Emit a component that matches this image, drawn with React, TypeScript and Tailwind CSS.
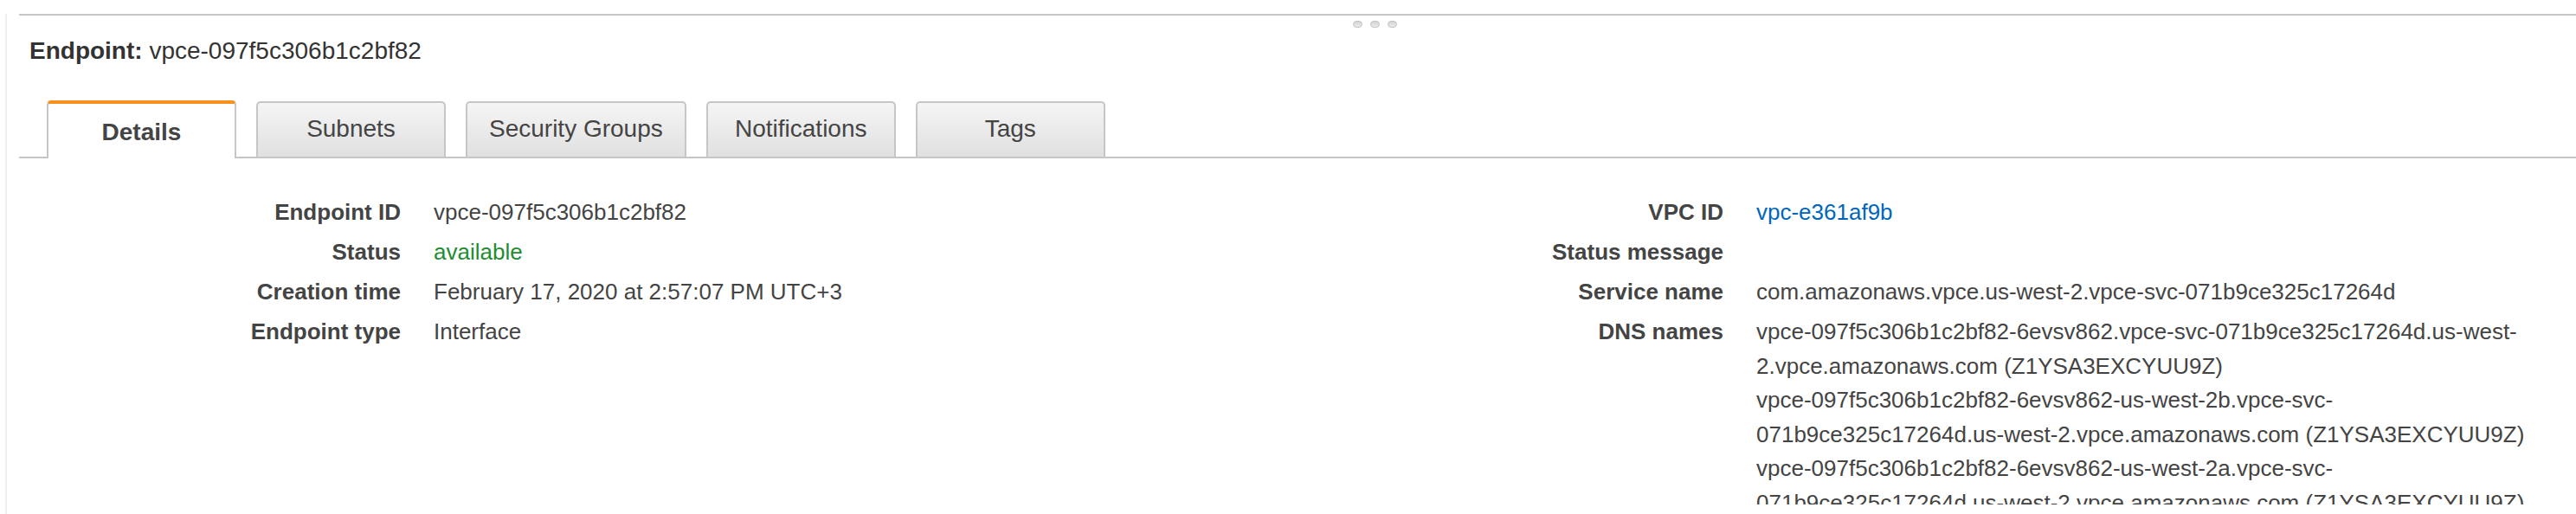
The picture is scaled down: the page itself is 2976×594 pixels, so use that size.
import React from 'react';

const left = [
  { label: 'Endpoint ID', value: 'vpce-097f5c306b1c2bf82' },
  { label: 'Status', value: 'available', tone: 'green' },
  { label: 'Creation time', value: 'February 17, 2020 at 2:57:07 PM UTC+3' },
  { label: 'Endpoint type', value: 'Interface' },
];

const dnsNames = [
  ['vpce-097f5c306b1c2bf82-6evsv862.vpce-svc-071b9ce325c17264d.us-west-', '2.vpce.amazonaws.com (Z1YSA3EXCYUU9Z)'],
  ['vpce-097f5c306b1c2bf82-6evsv862-us-west-2b.vpce-svc-', '071b9ce325c17264d.us-west-2.vpce.amazonaws.com (Z1YSA3EXCYUU9Z)'],
  ['vpce-097f5c306b1c2bf82-6evsv862-us-west-2a.vpce-svc-', '071b9ce325c17264d.us-west-2.vpce.amazonaws.com (Z1YSA3EXCYUU9Z)'],
];

const tabs = ['Details', 'Subnets', 'Security Groups', 'Notifications', 'Tags'];

function Row({ label, children }: { label: string; children?: React.ReactNode }) {
  return (
    <div className="flex pb-[7px] leading-[39px]">
      <div className="w-[441px] shrink-0 text-right font-bold text-[#444]">{label}</div>
      <div className="ml-[38px] min-w-0 text-[#444]">{children}</div>
    </div>
  );
}

export default function App() {
  return (
    <div
      className="relative h-[594px] w-full overflow-hidden bg-white"
      style={{ fontFamily: '"Liberation Sans", Arial, Helvetica, sans-serif' }}
    >
      {/* resize handle */}
      <div className="absolute left-[1563px] top-[24px] z-10 flex gap-[9px]">
        {[0, 1, 2].map(i => (
          <div key={i} className="h-[8px] w-[11px] rounded-[4px] border border-[#c4c4c4] bg-gradient-to-b from-[#d4d4d4] to-[#ebebeb]" />
        ))}
      </div>

      <div className="ml-[6px] h-full border-l-2 border-[#eeeeee]">
        <div className="ml-[14px] mt-[16px] h-[567px] overflow-hidden border-t-2 border-[#c6c6c6]">
          <div className="mt-[24px] pl-[12px] text-[28px] leading-[34px] text-[#333]">
            <span className="font-bold">Endpoint:</span> vpce-097f5c306b1c2bf82
          </div>

          <div className="mt-[40px] flex items-end gap-[23px] border-b-2 border-[#c6c6c6] pl-[32px] text-[28px] text-[#444]">
            {tabs.map((t, i) =>
              i === 0 ? (
                <div
                  key={t}
                  className="-mb-[2px] h-[67px] min-w-[219px] rounded-t-[5px] border-x-2 border-t-4 border-x-[#c6c6c6] border-t-[#f7901e] bg-white px-[25px] pt-[3px] text-center font-bold leading-[60px]"
                >
                  {t}
                </div>
              ) : (
                <div
                  key={t}
                  className="h-[64px] min-w-[219px] rounded-t-[5px] border-x-2 border-t-2 border-[#c6c6c6] bg-gradient-to-b from-[#f5f5f5] to-[#e0e0e0] px-[25px] text-center leading-[60px]"
                >
                  {t}
                </div>
              )
            )}
          </div>

          <div className="flex pt-[43px] text-[26px]">
            <div className="w-[1528px] shrink-0">
              {left.map(r => (
                <Row key={r.label} label={r.label}>
                  {r.tone === 'green' ? <span className="text-[#1e8d32]">{r.value}</span> : r.value}
                </Row>
              ))}
            </div>
            <div className="flex-1">
              <Row label="VPC ID">
                <span className="text-[#0066bb]">vpc-e361af9b</span>
              </Row>
              <Row label="Status message" />
              <Row label="Service name">com.amazonaws.vpce.us-west-2.vpce-svc-071b9ce325c17264d</Row>
              <Row label="DNS names">
                {dnsNames.map((d, i) => (
                  <div key={i}>
                    {d.map((line, j) => (
                      <div key={j} className="whitespace-nowrap leading-[39.5px]">{line}</div>
                    ))}
                  </div>
                ))}
              </Row>
            </div>
          </div>
        </div>
      </div>
    </div>
  );
}
